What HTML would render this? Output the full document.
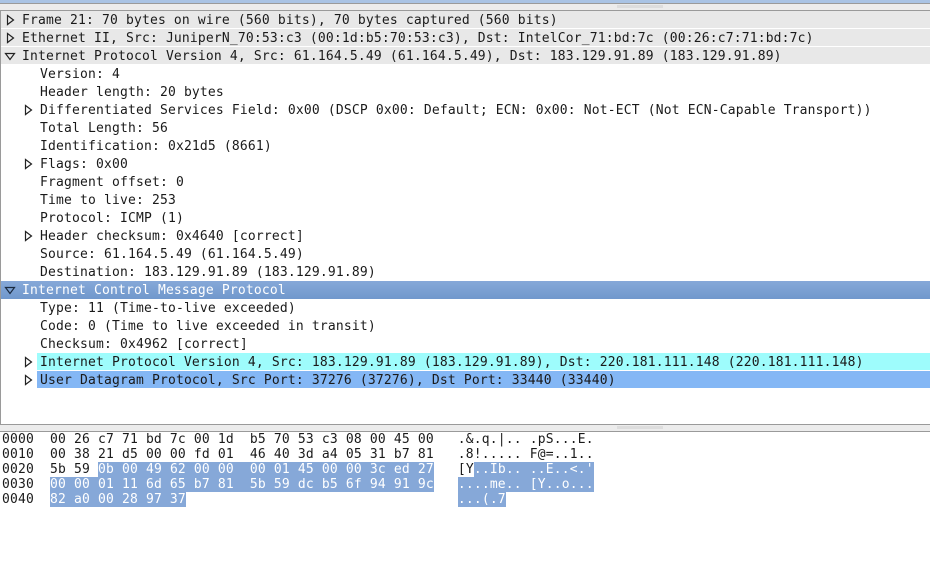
<!DOCTYPE html>
<html><head><style>
*{margin:0;padding:0;box-sizing:border-box}
body{width:930px;height:575px;background:#fff;overflow:hidden;position:relative;font-family:"DejaVu Sans Mono","Liberation Mono",monospace;font-size:13px;color:#1a1a1a;letter-spacing:0.17px}
.top{position:absolute;left:0;top:0;width:930px;height:3px;background:#a9c3e4}
.bar{position:absolute;left:0;width:930px;background:#ececec;border-top:1px solid #9a9a9a;border-bottom:1px solid #9a9a9a}
.grip{position:absolute;left:617px;width:46px;height:3px;top:1px;background-image:radial-gradient(#b0b0b0 40%,transparent 41%);background-size:2px 2px}
.tree{position:absolute;left:0;top:11px;width:930px;height:413px;border-left:1px solid #9a9a9a}
.r{position:absolute;left:0;width:929px;height:18px;line-height:18px;white-space:pre}
.g{background:#e8e8e8;border-bottom:1px solid #fff}
.t{position:absolute;top:1px}
.sel{background:linear-gradient(#86a8d8,#7098cc);color:#fff}
svg.a{position:absolute;top:3px;width:12px;height:12px}
.hex{position:absolute;left:2px;top:432px;line-height:15px;white-space:pre;font-size:13px}
.hl{background:#86a8d8;color:#fff}
</style></head><body>
<div class="top"></div>
<div class="bar" style="top:3px;height:8px"><div class="grip"></div></div>
<div class="tree">
<div class="r g" style="top:0"><svg class="a" style="left:3px" viewBox="0 0 12 12"><path d="M3.5 1.5 L9.5 6 L3.5 10.5 Z" fill="none" stroke="#222" stroke-width="1.2"/></svg><span class="t" style="left:21px">Frame 21: 70 bytes on wire (560 bits), 70 bytes captured (560 bits)</span></div>
<div class="r g" style="top:18px"><svg class="a" style="left:3px" viewBox="0 0 12 12"><path d="M3.5 1.5 L9.5 6 L3.5 10.5 Z" fill="none" stroke="#222" stroke-width="1.2"/></svg><span class="t" style="left:21px">Ethernet II, Src: JuniperN_70:53:c3 (00:1d:b5:70:53:c3), Dst: IntelCor_71:bd:7c (00:26:c7:71:bd:7c)</span></div>
<div class="r g" style="top:36px"><svg class="a" style="left:3px" viewBox="0 0 12 12"><path d="M1.5 3.5 L10.5 3.5 L6 9.5 Z" fill="none" stroke="#222" stroke-width="1.2"/></svg><span class="t" style="left:21px">Internet Protocol Version 4, Src: 61.164.5.49 (61.164.5.49), Dst: 183.129.91.89 (183.129.91.89)</span></div>
<div class="r" style="top:54px"><span class="t" style="left:39px">Version: 4</span></div>
<div class="r" style="top:72px"><span class="t" style="left:39px">Header length: 20 bytes</span></div>
<div class="r" style="top:90px"><svg class="a" style="left:21px" viewBox="0 0 12 12"><path d="M3.5 1.5 L9.5 6 L3.5 10.5 Z" fill="none" stroke="#222" stroke-width="1.2"/></svg><span class="t" style="left:39px">Differentiated Services Field: 0x00 (DSCP 0x00: Default; ECN: 0x00: Not-ECT (Not ECN-Capable Transport))</span></div>
<div class="r" style="top:108px"><span class="t" style="left:39px">Total Length: 56</span></div>
<div class="r" style="top:126px"><span class="t" style="left:39px">Identification: 0x21d5 (8661)</span></div>
<div class="r" style="top:144px"><svg class="a" style="left:21px" viewBox="0 0 12 12"><path d="M3.5 1.5 L9.5 6 L3.5 10.5 Z" fill="none" stroke="#222" stroke-width="1.2"/></svg><span class="t" style="left:39px">Flags: 0x00</span></div>
<div class="r" style="top:162px"><span class="t" style="left:39px">Fragment offset: 0</span></div>
<div class="r" style="top:180px"><span class="t" style="left:39px">Time to live: 253</span></div>
<div class="r" style="top:198px"><span class="t" style="left:39px">Protocol: ICMP (1)</span></div>
<div class="r" style="top:216px"><svg class="a" style="left:21px" viewBox="0 0 12 12"><path d="M3.5 1.5 L9.5 6 L3.5 10.5 Z" fill="none" stroke="#222" stroke-width="1.2"/></svg><span class="t" style="left:39px">Header checksum: 0x4640 [correct]</span></div>
<div class="r" style="top:234px"><span class="t" style="left:39px">Source: 61.164.5.49 (61.164.5.49)</span></div>
<div class="r" style="top:252px"><span class="t" style="left:39px">Destination: 183.129.91.89 (183.129.91.89)</span></div>
<div class="r sel" style="top:270px"><svg class="a" style="left:3px" viewBox="0 0 12 12"><path d="M1.5 3.5 L10.5 3.5 L6 9.5 Z" fill="none" stroke="#1a2a40" stroke-width="1.2"/></svg><span class="t" style="left:21px">Internet Control Message Protocol</span></div>
<div class="r" style="top:288px"><span class="t" style="left:39px">Type: 11 (Time-to-live exceeded)</span></div>
<div class="r" style="top:306px"><span class="t" style="left:39px">Code: 0 (Time to live exceeded in transit)</span></div>
<div class="r" style="top:324px"><span class="t" style="left:39px">Checksum: 0x4962 [correct]</span></div>
<div class="r" style="top:342px"><div style="position:absolute;left:36px;top:0;width:893px;height:17px;background:#9efcfc"></div><svg class="a" style="left:21px" viewBox="0 0 12 12"><path d="M3.5 1.5 L9.5 6 L3.5 10.5 Z" fill="none" stroke="#222" stroke-width="1.2"/></svg><span class="t" style="left:39px">Internet Protocol Version 4, Src: 183.129.91.89 (183.129.91.89), Dst: 220.181.111.148 (220.181.111.148)</span></div>
<div class="r" style="top:360px"><div style="position:absolute;left:36px;top:0;width:893px;height:17px;background:#84b7f5"></div><svg class="a" style="left:21px" viewBox="0 0 12 12"><path d="M3.5 1.5 L9.5 6 L3.5 10.5 Z" fill="none" stroke="#222" stroke-width="1.2"/></svg><span class="t" style="left:39px">User Datagram Protocol, Src Port: 37276 (37276), Dst Port: 33440 (33440)</span></div>
</div>
<div class="bar" style="top:424px;height:8px"><div class="grip"></div></div>
<div class="hex">0000  00 26 c7 71 bd 7c 00 1d  b5 70 53 c3 08 00 45 00   .&amp;.q.|.. .pS...E.
0010  00 38 21 d5 00 00 fd 01  46 40 3d a4 05 31 b7 81   .8!..... F@=..1..
0020  5b 59 <span class="hl">0b 00 49 62 00 00  00 01 45 00 00 3c ed 27</span>   [Y<span class="hl">..Ib.. ..E..&lt;.'</span>
0030  <span class="hl">00 00 01 11 6d 65 b7 81  5b 59 dc b5 6f 94 91 9c</span>   <span class="hl">....me.. [Y..o...</span>
0040  <span class="hl">82 a0 00 28 97 37</span>                                  <span class="hl">...(.7</span></div>
</body></html>
